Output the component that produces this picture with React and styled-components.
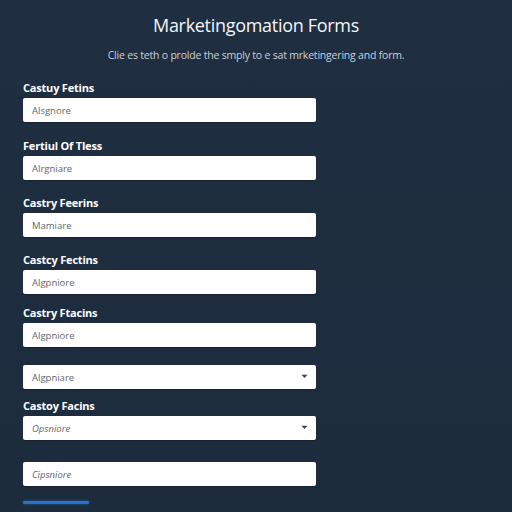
import React from "react";
import styled, { createGlobalStyle } from "styled-components";

const GlobalStyle = createGlobalStyle`
  html, body {
    margin: 0;
    padding: 0;
    background: #1e2d3e;
  }
  body {
    font-family: "Open Sans", "Liberation Sans", sans-serif;
    color: #ffffff;
  }
`;

const Page = styled.div`
  height: 512px;
  overflow: hidden;
  background: linear-gradient(180deg, #1f2e40 0%, #1d2c3d 100%);
  padding: 0 23px;
  box-sizing: border-box;
`;

const Header = styled.header`
  display: flex;
  flex-direction: column;
  align-items: center;
  padding-top: 11px;
`;

const Title = styled.h1`
  margin: 0;
  font-size: 18px;
  font-weight: 400;
  line-height: 28px;
  letter-spacing: -0.3px;
  color: #f4f6f9;
`;

const Subtitle = styled.p`
  margin: 9px 0 0;
  font-size: 10.5px;
  line-height: 14px;
  letter-spacing: -0.2px;
  color: #c9d0d9;
`;

const Form = styled.form`
  display: flex;
  flex-direction: column;
  width: 293px;
  margin-top: 19px;
`;

const Field = styled.div`
  display: flex;
  flex-direction: column;
  margin-top: ${(p) => p.$top}px;
`;

const Label = styled.label`
  font-size: 11px;
  font-weight: 700;
  line-height: 14px;
  color: #ffffff;
  margin-bottom: 3px;
  letter-spacing: -0.2px;
`;

const Control = styled.div`
  position: relative;
  height: 24px;
  background: #ffffff;
  border-radius: 2px;
  display: flex;
  align-items: center;
  padding: 0 9px;
  box-shadow: 0 1px 1px rgba(0, 0, 0, 0.25);
`;

const Placeholder = styled.span`
  font-size: 9.5px;
  color: #5f666e;
  font-style: ${(p) => (p.$italic ? "italic" : "normal")};
`;

const Chevron = styled.svg`
  position: absolute;
  right: 8px;
  top: 9px;
`;

const Accent = styled.div`
  width: 66px;
  height: 3px;
  margin-top: 15px;
  background: #2472cc;
  border-radius: 1px;
  box-shadow: 0 0 3px rgba(36, 114, 204, 0.6);
`;

const fields = [
  { label: "Castuy Fetins", value: "Alsgnore", top: 0 },
  { label: "Fertiul Of Tless", value: "Alrgniare", top: 17 },
  { label: "Castry Feerins", value: "Mamiare", top: 16 },
  { label: "Castcy Fectins", value: "Algpniore", top: 16 },
  { label: "Castry Ftacins", value: "Algpniore", top: 12 },
  { label: null, value: "Algpniare", top: 18, select: true },
  { label: "Castoy Facins", value: "Opsniore", top: 10, select: true, italic: true },
  { label: null, value: "Cipsniore", top: 22, italic: true },
];

const App = () => {
  return (
    <>
      <GlobalStyle />
      <Page>
        <Header>
          <Title>Marketingomation Forms</Title>
          <Subtitle>
            Clie es teth o prolde the smply to e sat mrketingering and form.
          </Subtitle>
        </Header>
        <Form>
          {fields.map((f, i) => (
            <Field key={i} $top={f.top}>
              {f.label && <Label>{f.label}</Label>}
              <Control>
                <Placeholder $italic={f.italic}>{f.value}</Placeholder>
                {f.select && (
                  <Chevron width="7" height="5" viewBox="0 0 7 5">
                    <path d="M0.5 0.8 L3.5 4 L6.5 0.8 Z" fill="#3a4350" />
                  </Chevron>
                )}
              </Control>
            </Field>
          ))}
          <Accent />
        </Form>
      </Page>
    </>
  );
};

export default App;
